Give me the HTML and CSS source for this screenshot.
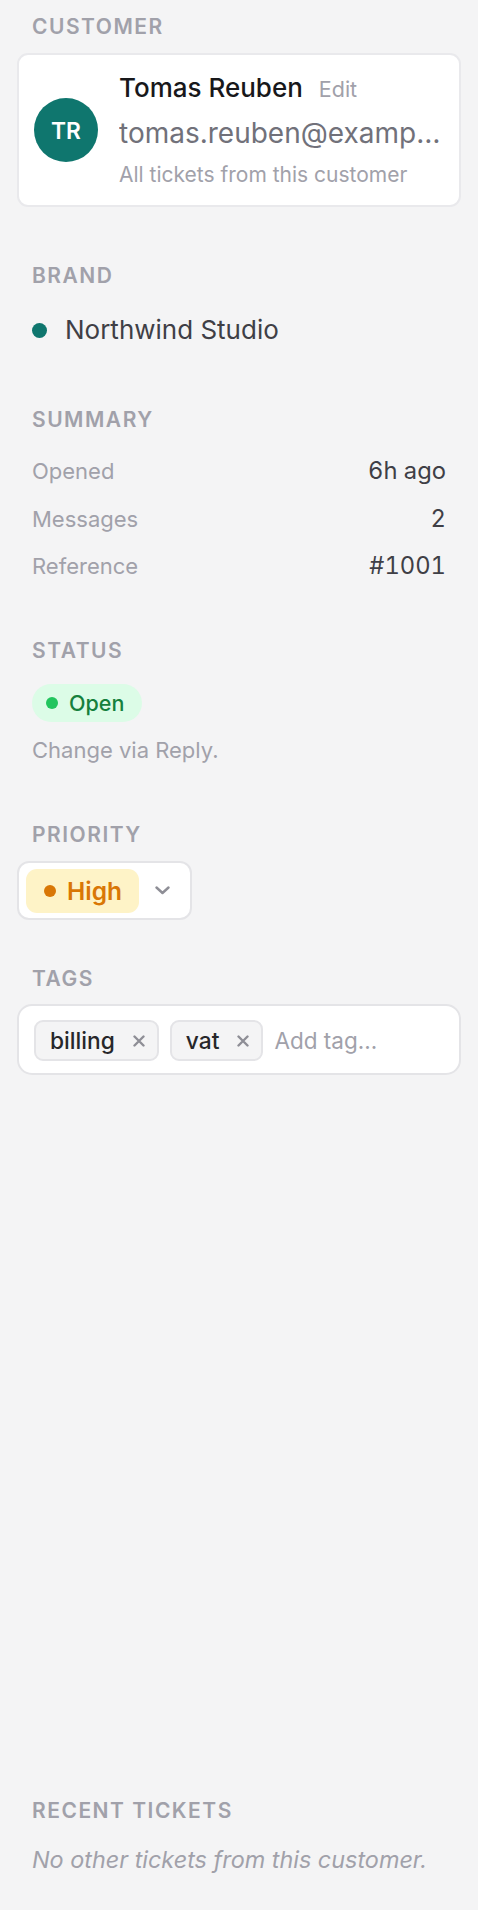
FILE: index.html
```html
<!DOCTYPE html>
<html lang="en">
<head>
<meta charset="utf-8">
<title>Ticket sidebar</title>
<link rel="stylesheet" href="styles.css">
</head>
<body>
<aside class="sidebar">
  <section class="section">
    <h3 class="label">Customer</h3>
    <div class="customer-card box">
      <div class="avatar">TR</div>
      <div class="customer-info">
        <div class="name-row"><span class="name">Tomas Reuben</span><span class="edit">Edit</span></div>
        <div class="email">tomas.reuben@example.com</div>
        <div class="sub">All tickets from this customer</div>
      </div>
    </div>
  </section>

  <section class="section gap-lg">
    <h3 class="label">Brand</h3>
    <div class="brand-row"><span class="brand-dot"></span><span class="brand-name">Northwind Studio</span></div>
  </section>

  <section class="section gap-md">
    <h3 class="label">Summary</h3>
    <dl class="summary">
      <div class="summary-row"><dt>Opened</dt><dd>6h ago</dd></div>
      <div class="summary-row"><dt>Messages</dt><dd>2</dd></div>
      <div class="summary-row"><dt>Reference</dt><dd>#1001</dd></div>
    </dl>
  </section>

  <section class="section gap-md">
    <h3 class="label">Status</h3>
    <span class="status-pill"><span class="status-dot"></span>Open</span>
    <p class="hint">Change via Reply.</p>
  </section>

  <section class="section gap-lg">
    <h3 class="label">Priority</h3>
    <div class="priority-select box">
      <span class="priority-pill"><span class="priority-dot"></span>High</span>
      <svg class="chevron" width="15" height="9" viewBox="0 0 15 9"><polyline points="1.5,1.5 7.5,7 13.5,1.5" fill="none" stroke="#8e8e96" stroke-width="2.4" stroke-linecap="round" stroke-linejoin="round"/></svg>
    </div>
  </section>

  <section class="section gap-sm">
    <h3 class="label label-tight">Tags</h3>
    <div class="tags-box box">
      <span class="chip">billing<svg class="x" width="12" height="12" viewBox="0 0 12 12"><path d="M1.5 1.5 L10.5 10.5 M10.5 1.5 L1.5 10.5" stroke="#8e8e96" stroke-width="2.4" stroke-linecap="round"/></svg></span>
      <span class="chip">vat<svg class="x" width="12" height="12" viewBox="0 0 12 12"><path d="M1.5 1.5 L10.5 10.5 M10.5 1.5 L1.5 10.5" stroke="#8e8e96" stroke-width="2.4" stroke-linecap="round"/></svg></span>
      <input class="tag-input" type="text" placeholder="Add tag...">
    </div>
  </section>

  <section class="section recent">
    <h3 class="label">Recent tickets</h3>
    <p class="empty">No other tickets from this customer.</p>
  </section>
</aside>
</body>
</html>
```

FILE: styles.css
```css
* { box-sizing: border-box; }

html, body {
  margin: 0;
  padding: 0;
  background: #f4f4f5;
}

body {
  font-family: Inter, "Noto Sans", "Liberation Sans", sans-serif;
  color: #27272a;
}

.sidebar {
  min-height: 1910px;
  padding: 13px 32px 34px;
  display: flex;
  flex-direction: column;
}

.section {
  display: flex;
  flex-direction: column;
  align-items: flex-start;
}

.gap-lg { margin-top: 55px; }
.gap-md { margin-top: 47px; }
.gap-sm { margin-top: 45.5px; }

.label {
  margin: 0 0 12px;
  font-size: 21px;
  line-height: 28px;
  font-weight: 600;
  letter-spacing: 1.5px;
  text-transform: uppercase;
  color: #a1a1aa;
}

.label-tight { margin-bottom: 11px; }

.box {
  background: #ffffff;
  border: 2px solid #e4e4e7;
  margin-left: -15px;
  margin-right: -15px;
}

/* Customer card */
.customer-card {
  align-self: stretch;
  display: flex;
  align-items: center;
  gap: 21px;
  padding: 16px 15px;
  border-radius: 11px;
  border-color: #e9e9ec;
}

.avatar {
  flex: none;
  width: 64px;
  height: 64px;
  border-radius: 50%;
  background: #0f766e;
  color: #ffffff;
  display: flex;
  align-items: center;
  justify-content: center;
  font-size: 22.75px;
  font-weight: 600;
}

.customer-info {
  min-width: 0;
  flex: 1;
  display: flex;
  flex-direction: column;
}

.name-row {
  display: flex;
  align-items: baseline;
  gap: 16px;
  line-height: 34px;
}

.name {
  font-size: 26px;
  font-weight: 500;
  color: #18181b;
}

.edit {
  font-size: 21.5px;
  color: #a1a1aa;
}

.email {
  margin-top: 7px;
  font-size: 28px;
  line-height: 40px;
  color: #71717a;
  white-space: nowrap;
  overflow: hidden;
  text-overflow: ellipsis;
}

.sub {
  margin-top: 8px;
  font-size: 21px;
  line-height: 28px;
  color: #a1a1aa;
}

/* Brand */
.brand-row {
  display: flex;
  align-items: center;
  gap: 18px;
  padding: 11px 0;
  margin-top: -1px;
}

.brand-dot {
  width: 15px;
  height: 15px;
  border-radius: 50%;
  background: #0f766e;
}

.brand-name {
  font-size: 26px;
  line-height: 36px;
  color: #3f3f46;
}

/* Summary */
.summary {
  margin: 1px 0 0;
  align-self: stretch;
}

.summary-row {
  display: flex;
  justify-content: space-between;
  align-items: baseline;
  height: 47.5px;
  padding: 8px 0;
  line-height: 31.5px;
}

.summary-row dt {
  font-size: 22px;
  color: #a1a1aa;
}

.summary-row dd {
  margin: 0;
  font-size: 23.75px;
  color: #3f3f46;
  font-variant-numeric: tabular-nums;
}

/* Status */
.status-pill {
  margin-top: 7px;
  height: 38px;
  display: inline-flex;
  align-items: center;
  gap: 11px;
  padding: 0 18px 0 14px;
  border-radius: 19px;
  background: #dcfce7;
  color: #15803d;
  font-size: 21.5px;
  font-weight: 500;
}

.status-dot {
  width: 12px;
  height: 12px;
  border-radius: 50%;
  background: #22c55e;
}

.hint {
  margin: 12px 0 0;
  font-size: 22px;
  line-height: 32px;
  color: #a1a1aa;
}

/* Priority */
.priority-select {
  display: flex;
  align-items: center;
  padding: 6px 20px 5px 7px;
  border-radius: 12px;
}

.priority-pill {
  height: 44px;
  display: inline-flex;
  align-items: center;
  gap: 11px;
  padding: 0 17px 0 18px;
  border-radius: 11px;
  background: #fef3c7;
  color: #d97706;
  font-size: 24.5px;
  font-weight: 600;
}

.priority-dot {
  width: 12px;
  height: 12px;
  border-radius: 50%;
  background: #d97706;
}

.chevron {
  margin-left: 16px;
  display: block;
}

/* Tags */
.tags-box {
  align-self: stretch;
  display: flex;
  align-items: center;
  gap: 11px;
  padding: 14px 15px 12px;
  border-radius: 15px;
}

.chip {
  height: 41px;
  display: inline-flex;
  align-items: center;
  gap: 18px;
  padding: 0 12px 0 14px;
  border: 2px solid #e4e4e7;
  border-radius: 9px;
  background: #f4f4f5;
  color: #27272a;
  font-size: 22.75px;
  font-weight: 500;
}

.x { display: block; }

.tag-input {
  flex: 1;
  min-width: 0;
  border: 0;
  outline: none;
  padding: 0;
  background: transparent;
  font-family: inherit;
  font-size: 22.5px;
  line-height: 41px;
  color: #27272a;
}

.tag-input::placeholder { color: #a1a1aa; }

/* Recent */
.recent {
  margin-top: auto;
}

.empty {
  margin: 7px 0 0;
  font-size: 23.4px;
  line-height: 32px;
  font-style: italic;
  color: #a1a1aa;
}
```
